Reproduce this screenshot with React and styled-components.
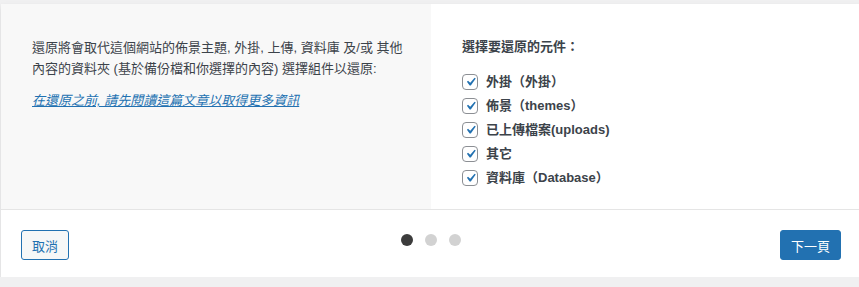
import React from 'react'
import styled, { createGlobalStyle } from 'styled-components'

const GlobalStyle = createGlobalStyle`
  body {
    margin: 0;
    background: #f0f0f1;
    font-family: "Liberation Sans", "Noto Sans CJK TC", sans-serif;
    color: #3c434a;
  }
`

const Card = styled.div`
  margin: 4px 0 0 1px;
  background: #fff;
  box-shadow: 0 3px 6px rgba(0, 0, 0, 0.1);
`

const Body = styled.div`
  display: grid;
  grid-template-columns: 430px 1fr;
  height: 205px;
  border-bottom: 1px solid #e5e5e5;
`

const Intro = styled.div`
  background: #f8f8f8;
  padding: 33px 20px 0 31px;
  font-size: 13px;
  line-height: 21px;
`

const Para = styled.p`
  margin: 0 0 11px;
`

const InfoLink = styled.a`
  color: #2271b1;
  font-style: italic;
  text-decoration: underline;
`

const Options = styled.div`
  padding: 33px 30px 0 31px;
`

const Heading = styled.div`
  font-size: 13px;
  font-weight: 700;
  line-height: 20px;
  margin-bottom: 17px;
`

const OptionList = styled.div`
  display: flex;
  flex-direction: column;
  gap: 8px;
`

const Option = styled.label`
  display: flex;
  align-items: center;
  gap: 8px;
  font-size: 13px;
  font-weight: 700;
  line-height: 16px;
`

const Box = styled.span`
  width: 16px;
  height: 16px;
  box-sizing: border-box;
  border: 1px solid #8c8f94;
  border-radius: 4px;
  background: #fff;
  display: flex;
  align-items: center;
  justify-content: center;
  overflow: visible;
`

const Footer = styled.div`
  display: grid;
  grid-template-columns: 1fr auto 1fr;
  align-items: start;
  padding: 20px 18px 17px 20px;
`

const Button = styled.button`
  justify-self: ${p => (p.$primary ? 'end' : 'start')};
  height: 30px;
  padding: 0 10px;
  border-radius: 3px;
  font-family: inherit;
  font-size: 13px;
  border: 1px solid #2271b1;
  color: ${p => (p.$primary ? '#fff' : '#2271b1')};
  background: ${p => (p.$primary ? '#2271b1' : '#f6f7f7')};
`

const Dots = styled.div`
  display: flex;
  gap: 12px;
  margin-top: 4px;
`

const Dot = styled.span`
  width: 12px;
  height: 12px;
  border-radius: 50%;
  background: ${p => (p.$active ? '#3c3c3c' : '#d2d2d2')};
`

const Check = () => (
  <Box>
    <svg width="18" height="18" viewBox="0 0 20 20" style={{ margin: '-1px -2px 0 -1px' }}>
      <path d="M14.83 4.89l1.34.94-5.81 8.38H9.02L5.78 9.67l1.34-1.25 2.57 2.4z" fill="#2271b1" />
    </svg>
  </Box>
)

const items = ['外掛（外掛）', '佈景（themes）', '已上傳檔案(uploads)', '其它', '資料庫（Database）']

export default function App() {
  return (
    <>
      <GlobalStyle />
      <Card>
        <Body>
          <Intro>
            <Para>
              還原將會取代這個網站的佈景主題, 外掛, 上傳, 資料庫 及/或 其他內容的資料夾 (基於備份檔和你選擇的內容) 選擇組件以還原:
            </Para>
            <InfoLink href="#">在還原之前, 請先閱讀這篇文章以取得更多資訊</InfoLink>
          </Intro>
          <Options>
            <Heading>選擇要還原的元件：</Heading>
            <OptionList>
              {items.map(item => (
                <Option key={item}>
                  <Check />
                  {item}
                </Option>
              ))}
            </OptionList>
          </Options>
        </Body>
        <Footer>
          <Button>取消</Button>
          <Dots>
            <Dot $active />
            <Dot />
            <Dot />
          </Dots>
          <Button $primary>下一頁</Button>
        </Footer>
      </Card>
    </>
  )
}
